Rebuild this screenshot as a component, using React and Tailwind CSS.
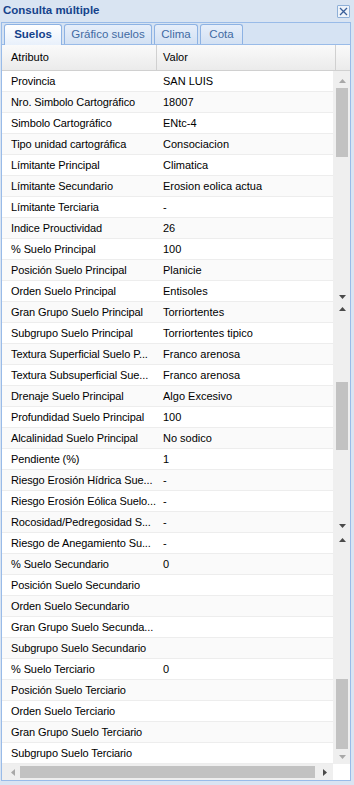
import React from "react";

const rows = [
  ["Provincia", "SAN LUIS"],
  ["Nro. Simbolo Cartográfico", "18007"],
  ["Simbolo Cartográfico", "ENtc-4"],
  ["Tipo unidad cartográfica", "Consociacion"],
  ["Límitante Principal", "Climatica"],
  ["Límitante Secundario", "Erosion eolica actua"],
  ["Límitante Terciaria", "-"],
  ["Indice Prouctividad", "26"],
  ["% Suelo Principal", "100"],
  ["Posición Suelo Principal", "Planicie"],
  ["Orden Suelo Principal", "Entisoles"],
  ["Gran Grupo Suelo Principal", "Torriortentes"],
  ["Subgrupo Suelo Principal", "Torriortentes tipico"],
  ["Textura Superficial Suelo P...", "Franco arenosa"],
  ["Textura Subsuperficial Sue...", "Franco arenosa"],
  ["Drenaje Suelo Principal", "Algo Excesivo"],
  ["Profundidad Suelo Principal", "100"],
  ["Alcalinidad Suelo Principal", "No sodico"],
  ["Pendiente (%)", "1"],
  ["Riesgo Erosión Hídrica Sue...", "-"],
  ["Riesgo Erosión Eólica Suelo...", "-"],
  ["Rocosidad/Pedregosidad S...", "-"],
  ["Riesgo de Anegamiento Su...", "-"],
  ["% Suelo Secundario", "0"],
  ["Posición Suelo Secundario", ""],
  ["Orden Suelo Secundario", ""],
  ["Gran Grupo Suelo Secunda...", ""],
  ["Subgrupo Suelo Secundario", ""],
  ["% Suelo Terciario", "0"],
  ["Posición Suelo Terciario", ""],
  ["Orden Suelo Terciario", ""],
  ["Gran Grupo Suelo Terciario", ""],
  ["Subgrupo Suelo Terciario", ""],
];

const Up = ({ color, className }) => (
  <svg width="7" height="4" viewBox="0 0 7 4" className={className}>
    <path d="M3.5 0 L7 4 L0 4 Z" fill={color} />
  </svg>
);
const Down = ({ color, className }) => (
  <svg width="7" height="4" viewBox="0 0 7 4" className={className}>
    <path d="M0 0 L7 0 L3.5 4 Z" fill={color} />
  </svg>
);
const Left = ({ color, className }) => (
  <svg width="4" height="7" viewBox="0 0 4 7" className={className}>
    <path d="M4 0 L4 7 L0 3.5 Z" fill={color} />
  </svg>
);
const Right = ({ color, className }) => (
  <svg width="4" height="7" viewBox="0 0 4 7" className={className}>
    <path d="M0 0 L4 3.5 L0 7 Z" fill={color} />
  </svg>
);

export default function App() {
  const font = { fontFamily: '"Liberation Sans", Arial, sans-serif' };
  return (
    <div
      className="w-[354px] h-[785px] bg-[#d9e4f2] flex flex-col overflow-hidden text-[11px] text-black"
      style={font}
    >
      {/* Title bar */}
      <div className="h-[22px] flex items-center justify-between pl-[3px] pr-[4px] shrink-0">
        <span className="font-bold text-[11.5px] text-[#15428b] leading-none">
          Consulta múltiple
        </span>
        <div className="w-[13px] h-[13px] border border-[#8fb0d8] bg-[#eef3fa] rounded-[1px] flex items-center justify-center">
          <svg width="9" height="9" viewBox="0 0 9 9">
            <path d="M1 1 L8 8 M8 1 L1 8" stroke="#3a5f9a" strokeWidth="1.3" />
          </svg>
        </div>
      </div>

      {/* Main box */}
      <div className="ml-[1px] w-[350px] border border-[#99bbe8] flex flex-col shrink-0">
        {/* Tab strip */}
        <div className="h-[22px] bg-[#d6e3f3] border-b border-[#99bbe8] flex items-end pl-[2px] gap-[2px]">
          <div className="w-[58px] h-[21px] -mb-[1px] rounded-t-[3px] border border-b-0 border-[#8db2e3] bg-gradient-to-b from-white to-[#e8f0fb] flex items-center justify-center font-bold text-[#15428b] text-[11.5px]">
            Suelos
          </div>
          <div className="w-[88px] h-[20px] rounded-t-[3px] border border-b-0 border-[#8db2e3] bg-gradient-to-b from-[#e6eefa] to-[#d3e1f3] flex items-center justify-center text-[#416aa3] text-[11.5px]">
            Gráfico suelos
          </div>
          <div className="w-[44px] h-[20px] rounded-t-[3px] border border-b-0 border-[#8db2e3] bg-gradient-to-b from-[#e6eefa] to-[#d3e1f3] flex items-center justify-center text-[#416aa3] text-[11.5px]">
            Clima
          </div>
          <div className="w-[43px] h-[20px] rounded-t-[3px] border border-b-0 border-[#8db2e3] bg-gradient-to-b from-[#e6eefa] to-[#d3e1f3] flex items-center justify-center text-[#416aa3] text-[11.5px]">
            Cota
          </div>
        </div>

        {/* Grid header */}
        <div className="h-[26px] flex bg-gradient-to-b from-[#fafafa] to-[#ebebeb] border-b border-[#d0d0d0]">
          <div className="w-[155px] border-r border-[#d0d0d0] flex items-center pl-[9px]">
            Atributo
          </div>
          <div className="w-[179px] border-r border-[#d0d0d0] flex items-center pl-[6px]">
            Valor
          </div>
          <div className="flex-1" />
        </div>

        {/* Body */}
        <div className="flex h-[693px]">
          <div className="w-[331px] flex flex-col">
            {rows.map(([a, v], i) => (
              <div
                key={i}
                className={
                  i % 2 === 1
                    ? "h-[21px] flex border-b border-[#ededed] bg-[#fafafa]"
                    : "h-[21px] flex border-b border-[#ededed] bg-white"
                }
              >
                <div className="w-[155px] pl-[9px] flex items-center whitespace-nowrap tracking-[-0.1px]">
                  {a}
                </div>
                <div className="flex-1 pl-[6px] flex items-center whitespace-nowrap overflow-hidden">
                  {v}
                </div>
              </div>
            ))}
          </div>
          {/* Vertical scrollbar (stitched) */}
          <div className="w-[17px] bg-[#efefef] flex flex-col">
            <Up color="#a8a8a8" className="ml-[6px] mt-[8px] shrink-0" />
            <div className="ml-[3px] w-[12px] h-[69px] mt-[5px] bg-[#c2c2c2] shrink-0" />
            <Down color="#4a4a4a" className="ml-[6px] mt-[138px] shrink-0" />
            <Up color="#4a4a4a" className="ml-[6px] mt-[8px] shrink-0" />
            <div className="ml-[3px] w-[12px] h-[68px] mt-[71px] bg-[#c2c2c2] shrink-0" />
            <Down color="#4a4a4a" className="ml-[6px] mt-[74px] shrink-0" />
            <Up color="#4a4a4a" className="ml-[6px] mt-[10px] shrink-0" />
            <div className="ml-[3px] w-[12px] h-[70px] mt-[137px] bg-[#c2c2c2] shrink-0" />
            <Down color="#a8a8a8" className="ml-[6px] mt-[6px] shrink-0" />
          </div>
        </div>

        {/* Horizontal scrollbar */}
        <div className="h-[16px] flex">
          <div className="w-[331px] bg-[#efefef] flex items-center">
            <Left color="#a8a8a8" className="ml-[9px] shrink-0" />
            <div className="ml-[5px] w-[295px] h-[12px] bg-[#c2c2c2]" />
            <Right color="#4a4a4a" className="ml-[8px] shrink-0" />
          </div>
          <div className="flex-1 bg-white" />
        </div>
      </div>
    </div>
  );
}
